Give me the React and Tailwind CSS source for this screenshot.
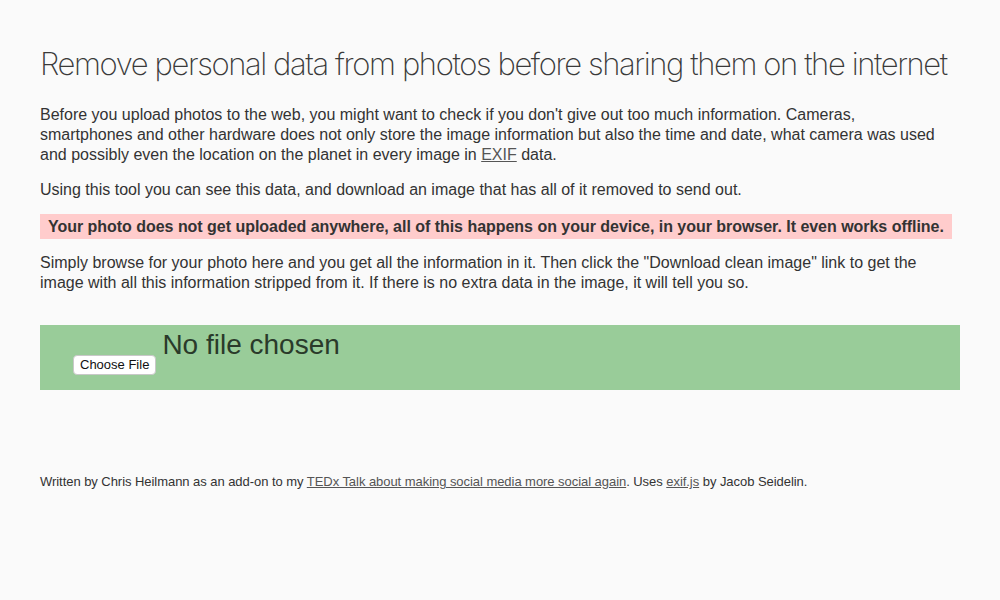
import React from 'react';

function App() {
  return (
    <div className="min-h-screen bg-[#fafafa] text-[#333] px-[40px] font-['Liberation_Sans',Arial,sans-serif]">
      <h1 className="pt-[45px] whitespace-nowrap text-[31px] leading-[38px] font-extralight tracking-[-1.4px] text-[#3a3a3a] font-['Inter',sans-serif]">
        Remove personal data from photos before sharing them on the internet
      </h1>

      <p className="mt-[22px] text-[16px] leading-[20px]">
        Before you upload photos to the web, you might want to check if you don't give out too much information. Cameras,
        <br />
        smartphones and other hardware does not only store the image information but also the time and date, what camera was used
        <br />
        and possibly even the location on the planet in every image in{' '}
        <a href="#" className="underline text-[#555]">EXIF</a> data.
      </p>

      <p className="mt-[15px] text-[16px] leading-[20px]">
        Using this tool you can see this data, and download an image that has all of it removed to send out.
      </p>

      <p className="mt-[14px] w-fit bg-[#ffcccc] px-[8px] py-[3px] text-[16px] leading-[19px] font-bold tracking-[-0.03px]">
        Your photo does not get uploaded anywhere, all of this happens on your device, in your browser. It even works offline.
      </p>

      <p className="mt-[14px] text-[16px] leading-[20px]">
        Simply browse for your photo here and you get all the information in it. Then click the "Download clean image" link to get the
        <br />
        image with all this information stripped from it. If there is no extra data in the image, it will tell you so.
      </p>

      <div className="mt-[32px] h-[65px] bg-[#99cc99] flex items-start pl-[33px]">
        <button className="mt-[30px] h-[20px] px-[6px] bg-white rounded-[4px] border border-[#c8c8c8] text-[13px] leading-[18px] text-[#111]">
          Choose File
        </button>
        <span className="ml-[6px] mt-[6px] text-[28px] leading-none text-[#2a3a2a]">
          No file chosen
        </span>
      </div>

      <p className="mt-[84px] text-[13px] leading-[16px] tracking-[-0.05px]">
        Written by Chris Heilmann as an add-on to my{' '}
        <a href="#" className="underline text-[#555]">TEDx Talk about making social media more social again</a>. Uses{' '}
        <a href="#" className="underline text-[#555]">exif.js</a> by Jacob Seidelin.
      </p>
    </div>
  );
}

export default App;
